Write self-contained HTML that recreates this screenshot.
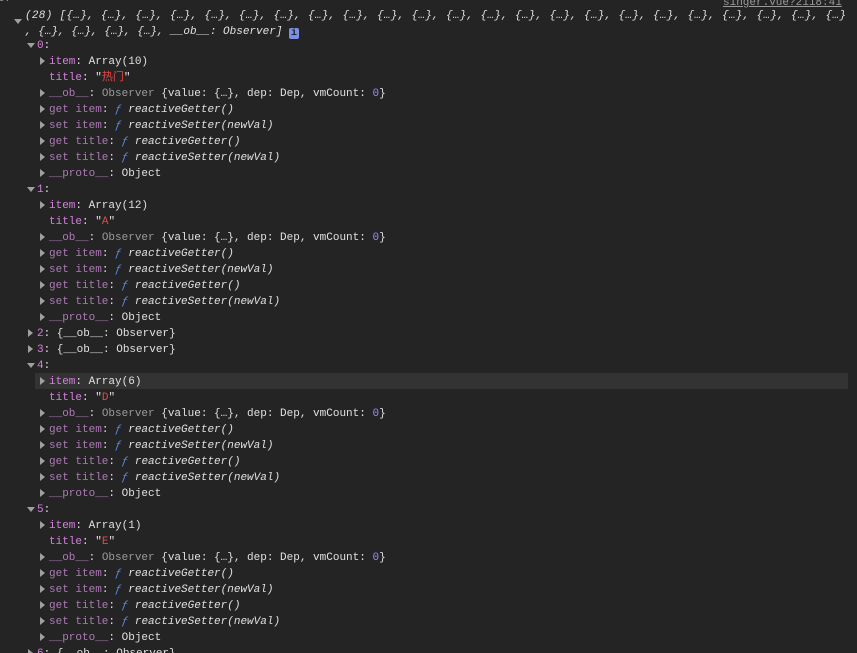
<!DOCTYPE html>
<html><head><meta charset="utf-8"><style>
html,body{margin:0;padding:0;background:#242424;width:857px;height:653px;overflow:hidden}
body{position:relative;font-family:"Liberation Mono","Noto Sans CJK SC",monospace;font-size:11px;color:#e0e0e0}
.r{position:absolute;height:16px;line-height:16px;white-space:pre}
.k{color:#d580dc}
.kd{color:#ad79b5}
.g{color:#9a9a9a}
.n{color:#9a8cff}
.s{color:#ee4444}
.f{color:#5a8cf0;font-style:italic}
.i{font-style:italic}
.tr{position:absolute;width:0;height:0;border-top:4px solid transparent;border-bottom:4px solid transparent;border-left:5px solid #a0a0a0}
.td{position:absolute;width:0;height:0;border-left:4px solid transparent;border-right:4px solid transparent;border-top:5px solid #a0a0a0}
.hl{position:absolute;left:35px;width:813px;height:16px;background:#333}
.info{display:inline-block;width:10px;height:11px;background:#7a90e8;color:#242424;border-radius:2px;font-size:10px;line-height:11px;text-align:center;font-style:normal;font-weight:bold;vertical-align:-1px;letter-spacing:0}
.hd{letter-spacing:0.3px}
</style></head><body>
<div class="r g" style="left:-2px;top:-9px">s7</div>
<div class="r g" style="left:723px;top:-5px;text-decoration:underline">singer.vue?2118:41</div>
<div class="td" style="left:14px;top:19px"></div>
<div class="r i hd" style="left:25px;top:8px">(28) [{…}, {…}, {…}, {…}, {…}, {…}, {…}, {…}, {…}, {…}, {…}, {…}, {…}, {…}, {…}, {…}, {…}, {…}, {…}, {…}, {…}, {…}, {…}</div>
<div class="r i" style="left:25px;top:24px">, {…}, {…}, {…}, {…}, __ob__: Observer] <span class="info">i</span></div>
<div class="hl" style="top:373px"></div>
<div id="c"></div>
<script>
var rows=[];
function block(idx,top,n,str){
 rows.push([top,'d',27,'<span class="k">'+idx+'</span>:',37]);
 var t=top+16;
 var L=[
 ['r','<span class="k">item</span>: Array('+n+')'],
 ['','<span class="k">title</span>: "<span class="s">'+str+'</span>"'],
 ['r','<span class="kd">__ob__</span>: <span class="g">Observer</span> {value: {…}, dep: Dep, vmCount: <span class="n">0</span>}'],
 ['r','<span class="kd">get item</span>: <span class="f">ƒ</span> <span class="i">reactiveGetter()</span>'],
 ['r','<span class="kd">set item</span>: <span class="f">ƒ</span> <span class="i">reactiveSetter(newVal)</span>'],
 ['r','<span class="kd">get title</span>: <span class="f">ƒ</span> <span class="i">reactiveGetter()</span>'],
 ['r','<span class="kd">set title</span>: <span class="f">ƒ</span> <span class="i">reactiveSetter(newVal)</span>'],
 ['r','<span class="kd">__proto__</span>: Object']];
 L.forEach(function(l){rows.push([t,l[0],39,l[1],49]);t+=16;});
}
block(0,37,10,'热门');
block(1,181,12,'A');
rows.push([325,'r',27,'<span class="k">2</span>: {__ob__: Observer}',37]);
rows.push([341,'r',27,'<span class="k">3</span>: {__ob__: Observer}',37]);
block(4,357,6,'D');
block(5,501,1,'E');
rows.push([645,'r',27,'<span class="k">6</span>: {__ob__: Observer}',37]);
var h='';
rows.forEach(function(r){
 if(r[1]=='r')h+='<div class="tr" style="left:'+(r[2]+1)+'px;top:'+(r[0]+4)+'px"></div>';
 if(r[1]=='d')h+='<div class="td" style="left:'+r[2]+'px;top:'+(r[0]+6)+'px"></div>';
 h+='<div class="r" style="left:'+r[4]+'px;top:'+(r[0]+1)+'px">'+r[3]+'</div>';
});
document.getElementById('c').innerHTML=h;
</script>
</body></html>
